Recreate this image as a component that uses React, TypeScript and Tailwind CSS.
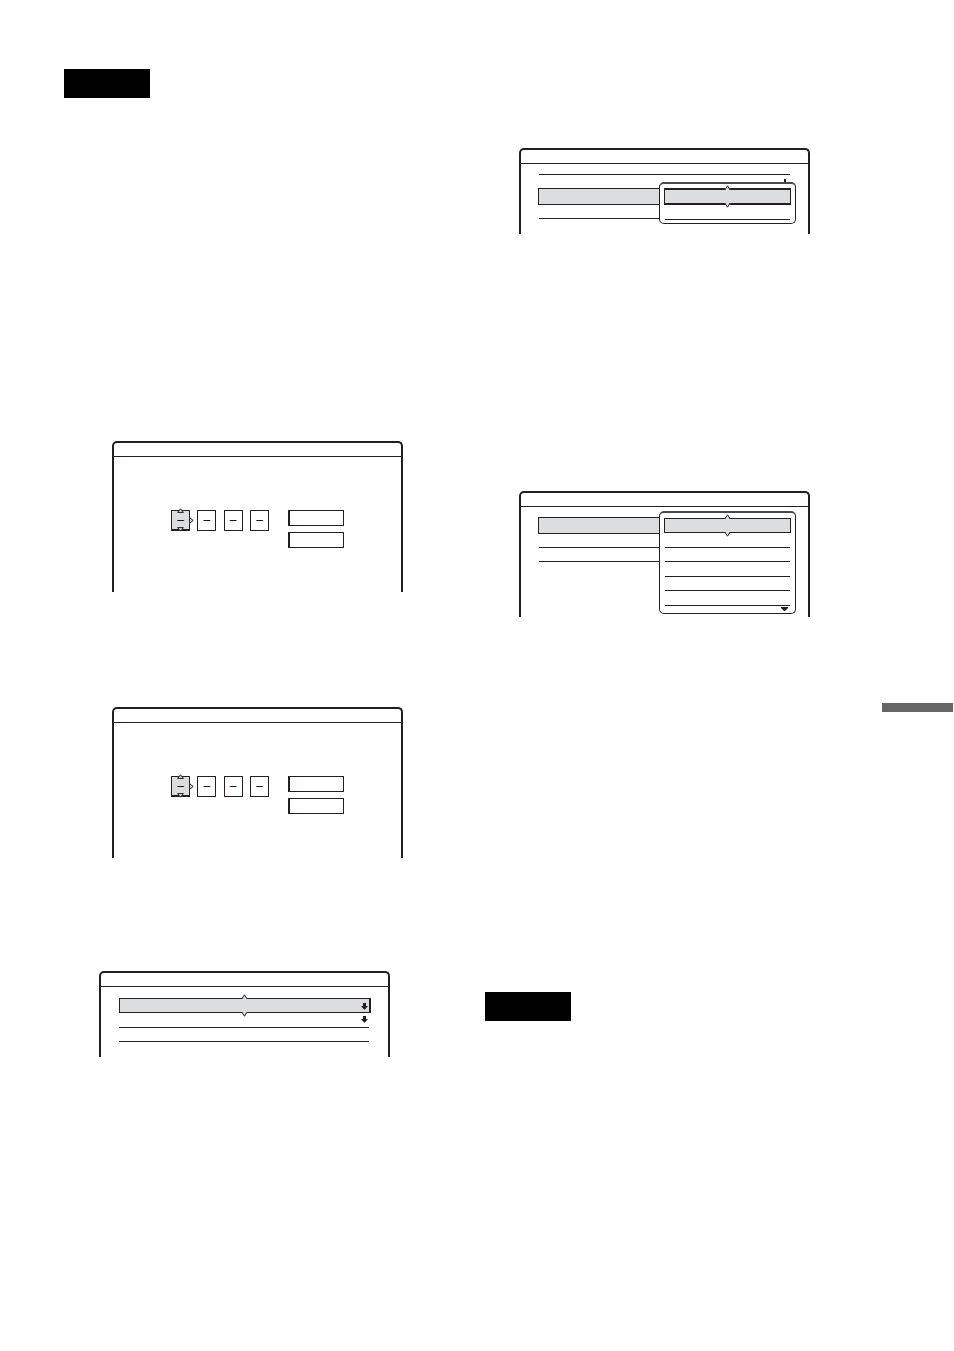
import clsx from "clsx";
import type { ReactNode } from "react";

type Direction = "up" | "down" | "right";

const rotation: Record<Direction, string> = {
  up: "",
  down: "rotate-180",
  right: "rotate-90",
};

function Caret({
  direction,
  outlined,
  className,
}: {
  direction: Direction;
  outlined?: boolean;
  className?: string;
}) {
  return (
    <svg
      viewBox="0 0 7 5"
      className={clsx("absolute h-[5px] w-[7px]", rotation[direction], className)}
      aria-hidden="true"
    >
      <path
        d={
          outlined
            ? "M0.5 4.5 L3.5 0.7 L6.5 4.5 Z"
            : "M0.5 4.5 L3.5 0.7 L6.5 4.5 M1.5 5 L3.5 2 L5.5 5"
        }
        fill="#dcddde"
      />
      <path
        d={
          outlined
            ? "M0.6 4.4 L3.5 0.8 L6.4 4.4 Z"
            : "M0.8 5 L3.5 0.8 L6.2 5"
        }
        fill="none"
        stroke="#231f20"
        strokeWidth="1"
      />
    </svg>
  );
}

function Arrow({ className }: { className?: string }) {
  return (
    <svg
      viewBox="0 0 7 7"
      className={clsx("h-[7px] w-[7px]", className)}
      aria-hidden="true"
    >
      <path d="M2 0 H5 V3 H7 L4 6.5 H3 L0 3 H2 Z" fill="#231f20" />
    </svg>
  );
}

function Tag({ className }: { className?: string }) {
  return <div className={clsx("h-[29px] w-[86px] bg-black", className)} />;
}

function Panel({
  className,
  children,
}: {
  className?: string;
  children: ReactNode;
}) {
  return (
    <section
      className={clsx(
        "relative rounded-t-[5px] border-2 border-b-0 border-[#231f20]",
        className,
      )}
    >
      <header className="h-[14px] border-b border-[#231f20]" />
      {children}
    </section>
  );
}

function Row({ className }: { className?: string }) {
  return <li className={clsx("border-b border-[#231f20]", className)} />;
}

function Selected({
  label,
  className,
  children,
}: {
  label: string;
  className?: string;
  children?: ReactNode;
}) {
  return (
    <li className="flex">
      <button
        type="button"
        aria-label={label}
        className={clsx(
          "relative w-full border border-[#231f20] bg-[#dcddde]",
          className,
        )}
      >
        {children}
      </button>
    </li>
  );
}

function Carets() {
  return (
    <>
      <Caret direction="up" className="-top-[5px] left-1/2 -ml-1" />
      <Caret direction="down" className="-bottom-[5px] left-1/2 -ml-1" />
    </>
  );
}

function Popup({
  className,
  children,
}: {
  className?: string;
  children: ReactNode;
}) {
  return (
    <ul
      className={clsx(
        "absolute right-3 w-[137px] rounded-[5px] border border-t-2 border-[#231f20] border-t-[#4a4748] bg-white px-1",
        className,
      )}
    >
      {children}
    </ul>
  );
}

const digits = ["First", "Second", "Third", "Fourth"];

function PasswordPanel({ className }: { className?: string }) {
  return (
    <Panel className={clsx("pb-[44px]", className)}>
      <form className="mt-[53px] ml-[57px] flex items-start">
        <div className="flex w-[98px] justify-between">
          {digits.map((digit, i) => (
            <div key={digit} className="relative flex">
              <input
                aria-label={`${digit} digit`}
                defaultValue="–"
                className={clsx(
                  "h-[21px] w-[19px] border border-[#231f20] text-center font-['Liberation_Sans',sans-serif] text-xs text-black",
                  i === 0 ? "border-b-2 bg-[#dcddde]" : "bg-white pb-px",
                )}
              />
              {i === 0 && (
                <>
                  <Caret outlined direction="up" className="-top-[2px] left-[6px]" />
                  <Caret outlined direction="down" className="-bottom-px left-[6px]" />
                  <Caret outlined direction="right" className="top-2 -right-[5px]" />
                </>
              )}
            </div>
          ))}
        </div>
        <div className="ml-[19px] flex flex-col gap-[6px]">
          <button
            type="button"
            aria-label="OK"
            className="h-4 w-14 border border-l-2 border-[#231f20]"
          />
          <button
            type="button"
            aria-label="Cancel"
            className="h-4 w-14 border border-l-2 border-[#231f20]"
          />
        </div>
      </form>
    </Panel>
  );
}

export default function App() {
  return (
    <div className="flex min-h-screen bg-white">
      <main className="grid flex-1 grid-cols-[421fr_397fr] items-start pb-16 pl-16">
        <div className="pt-[69px]">
          <Tag />
          <PasswordPanel className="mt-[343px] mr-[82px] ml-12" />
          <PasswordPanel className="mt-[115px] mr-[82px] ml-12" />
          <Panel className="mt-[113px] mr-[95px] ml-[35px]">
            <ul className="pt-[11px] pr-[17px] pb-[15px] pl-[18px]">
              <Selected label="Setting" className="h-[15px] border-r-2">
                <Carets />
                <Arrow className="absolute top-1 right-[1px]" />
              </Selected>
              <li className="mr-[2px] flex h-[15px] justify-end border-b border-[#231f20] pt-[3px] pr-[1px]">
                <Arrow />
              </li>
              <Row className="mr-[2px] h-[14px]" />
            </ul>
          </Panel>
        </div>

        <div className="pt-[148px]">
          <Panel className="mr-[72px] ml-[34px]">
            <ul className="pr-[18px] pb-[15px] pl-[17px]">
              <Row className="ml-px h-[11px]" />
              <li className="flex h-[13px] justify-end pt-1 pr-[2px]">
                <svg viewBox="0 0 7 4" className="h-1 w-[7px]" aria-hidden="true">
                  <path d="M3 0 H5 V3 H7 V4 H1 V3 H3 Z" fill="#231f20" />
                </svg>
              </li>
              <Selected label="Setting" className="h-[17px]" />
              <Row className="ml-px h-[14px]" />
            </ul>
            <Popup className="top-8 pt-1 pb-[3px]">
              <Selected label="Option" className="h-[17px] border-y-2">
                <Carets />
              </Selected>
              <Row className="mx-px h-[15px]" />
            </Popup>
          </Panel>

          <Panel className="mt-[257px] mr-[72px] ml-[34px]">
            <ul className="pt-[10px] pr-[18px] pb-[55px] pl-[17px]">
              <Selected label="Setting" className="h-[17px]" />
              <Row className="ml-px h-[14px]" />
              <Row className="ml-px h-[14px]" />
            </ul>
            <Popup className="top-[18px] pt-[5px]">
              <Selected label="Option" className="h-[15px]">
                <Carets />
              </Selected>
              <Row className="mx-px h-[15px]" />
              <Row className="mx-px h-[14px]" />
              <Row className="mx-px h-[15px]" />
              <Row className="mx-px h-[14px]" />
              <Row className="mx-px h-[15px]" />
              <li className="flex h-[7px] justify-end pt-px pr-[3px]">
                <svg viewBox="0 0 7 4" className="h-1 w-[7px]" aria-hidden="true">
                  <path d="M0 0 H7 V1 L4 4 H3 L0 1 Z" fill="#231f20" />
                </svg>
              </li>
            </Popup>
          </Panel>

          <Tag className="mt-[375px]" />
        </div>
      </main>

      <aside className="w-[72px] pt-[703px] pr-px">
        <div className="h-[9px] bg-[#666666]" />
      </aside>
    </div>
  );
}
